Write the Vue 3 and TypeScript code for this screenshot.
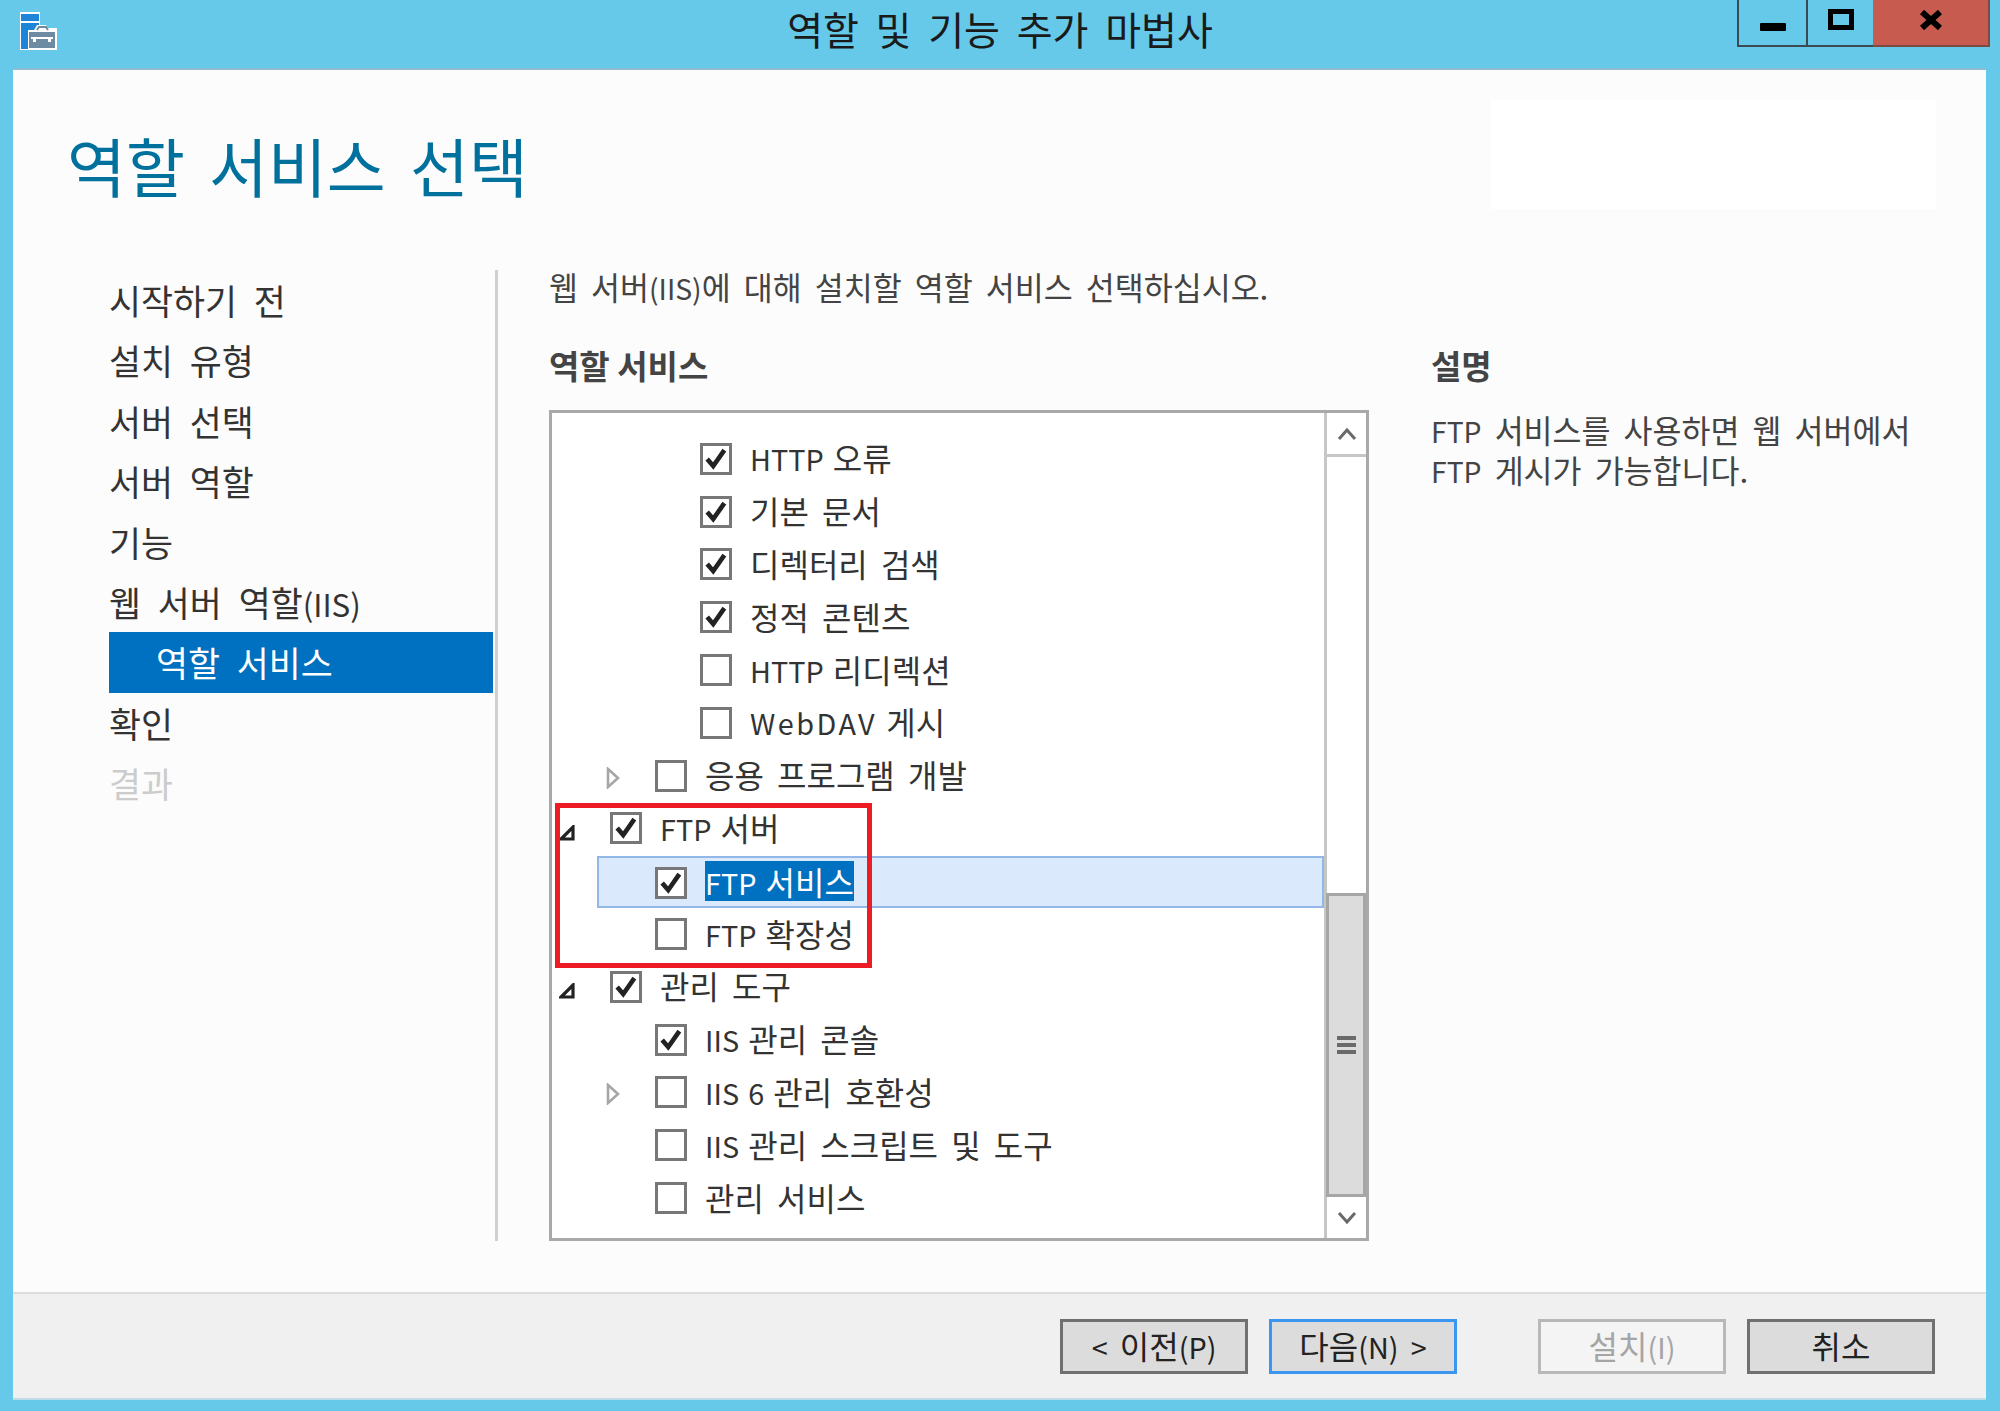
<script setup lang="ts">
interface Row {
  label: string
  level: 0 | 1 | 2
  checked: boolean
  expander?: 'open' | 'closed'
  selected?: boolean
  wide?: boolean
}

interface Seg {
  t: string
  latin: boolean
}

// The reference's Latin glyphs are set smaller than its Hangul, so mixed strings are split.
function segs(text: string): Seg[] {
  return text
    .split(/([A-Za-z0-9()<>]+)/)
    .filter((t) => t.length > 0)
    .map((t) => ({ t, latin: /^[A-Za-z0-9()<>]/.test(t) }))
}

const steps: { label: string; state?: string }[] = [
  { label: '시작하기 전' },
  { label: '설치 유형' },
  { label: '서버 선택' },
  { label: '서버 역할' },
  { label: '기능' },
  { label: '웹 서버 역할(IIS)' },
  { label: '역할 서비스', state: 'active' },
  { label: '확인' },
  { label: '결과', state: 'disabled' },
]

const rows: Row[] = [
  { label: 'HTTP 오류', level: 2, checked: true },
  { label: '기본 문서', level: 2, checked: true },
  { label: '디렉터리 검색', level: 2, checked: true },
  { label: '정적 콘텐츠', level: 2, checked: true },
  { label: 'HTTP 리디렉션', level: 2, checked: false },
  { label: 'WebDAV 게시', level: 2, checked: false, wide: true },
  { label: '응용 프로그램 개발', level: 1, checked: false, expander: 'closed' },
  { label: 'FTP 서버', level: 0, checked: true, expander: 'open' },
  { label: 'FTP 서비스', level: 1, checked: true, selected: true },
  { label: 'FTP 확장성', level: 1, checked: false },
  { label: '관리 도구', level: 0, checked: true, expander: 'open' },
  { label: 'IIS 관리 콘솔', level: 1, checked: true },
  { label: 'IIS 6 관리 호환성', level: 1, checked: false, expander: 'closed' },
  { label: 'IIS 관리 스크립트 및 도구', level: 1, checked: false },
  { label: '관리 서비스', level: 1, checked: false },
]

const intro = '웹 서버(IIS)에 대해 설치할 역할 서비스 선택하십시오.'
const descLines = ['FTP 서비스를 사용하면 웹 서버에서', 'FTP 게시가 가능합니다.']
const buttons: { label: string; kind?: string }[] = [
  { label: '< 이전(P)' },
  { label: '다음(N) >', kind: 'btn-default' },
  { label: '설치(I)', kind: 'btn-disabled' },
  { label: '취소' },
]
</script>

<template>
  <div class="window">
    <header class="titlebar">
      <svg class="app-icon" viewBox="0 0 40 40" width="40" height="40">
        <path d="M2 1h20v16h17v22H2z" fill="#fff" />
        <rect x="3" y="3" width="18" height="7" fill="#1e84d8" />
        <rect x="3" y="12" width="18" height="26" fill="#1e84d8" />
        <path d="M10 38V19h6l3-5h9l3 5h7v19z" fill="#fff" />
        <rect x="11" y="21" width="26" height="16" fill="#6f8aa3" />
        <path d="M19 19l2-3h7l2 3" fill="none" stroke="#6f8aa3" stroke-width="2" />
        <rect x="13" y="26" width="22" height="2" fill="#fff" />
        <rect x="15" y="26" width="3" height="5" fill="#fff" />
        <rect x="30" y="26" width="3" height="5" fill="#fff" />
      </svg>
      <div class="window-title">역할 및 기능 추가 마법사</div>
      <div class="controls">
        <div class="ctl ctl-min"><span class="min-glyph"></span></div>
        <div class="ctl ctl-max"><span class="max-glyph"></span></div>
        <div class="ctl ctl-close">
          <svg viewBox="0 0 24 20" width="24" height="20">
            <path d="M3 2l18 16M21 2L3 18" stroke="#000" stroke-width="6" fill="none" />
          </svg>
        </div>
      </div>
    </header>

    <main class="panel">
      <div class="head">
        <h1 class="page-title">역할 서비스 선택</h1>
        <div class="banner"></div>
      </div>

      <div class="body">
        <nav class="steps">
          <div v-for="s in steps" :key="s.label" class="step" :class="s.state">
            <span v-for="(p, i) in segs(s.label)" :key="i" :class="{ latin: p.latin }">{{ p.t }}</span>
          </div>
        </nav>

        <section class="content">
          <div class="main-col">
            <p class="intro"><span v-for="(p, i) in segs(intro)" :key="i" :class="{ latin: p.latin }">{{ p.t }}</span></p>
            <h2 class="col-head">역할 서비스</h2>
            <div class="listbox">
              <div class="tree">
                <div
                  v-for="r in rows"
                  :key="r.label"
                  class="row"
                  :class="'lvl' + r.level"
                >
                  <div class="inner" :class="{ selected: r.selected }">
                    <span class="slot">
                      <svg v-if="r.expander === 'closed'" class="tri-closed" viewBox="0 0 14 22" width="14" height="22">
                        <path d="M2 2l10 9-10 9z" fill="#fff" stroke="#a6a6a6" stroke-width="2.600" />
                      </svg>
                      <svg v-else-if="r.expander === 'open'" class="tri-open" viewBox="0 0 16 16" width="16" height="16">
                        <path d="M14 2v12H2z" fill="#fff" stroke="#222" stroke-width="3.200" />
                      </svg>
                    </span>
                    <span class="check">
                      <svg v-if="r.checked" viewBox="0 0 28 28" width="28" height="28">
                        <path d="M4.500 14l6.500 7.500L23 4.500" fill="none" stroke="#222" stroke-width="5" />
                      </svg>
                    </span>
                    <span class="label" :class="{ wide: r.wide }"><span v-for="(p, i) in segs(r.label)" :key="i" :class="{ latin: p.latin }">{{ p.t }}</span></span>
                  </div>
                </div>
              </div>
              <div class="scrollbar">
                <div class="sb-btn sb-up">
                  <svg viewBox="0 0 20 14" width="20" height="14">
                    <path d="M2 12l8-9 8 9" fill="none" stroke="#6a6a6a" stroke-width="3" />
                  </svg>
                </div>
                <div class="sb-track">
                  <div class="sb-thumb">
                    <span class="grip"></span><span class="grip"></span><span class="grip"></span>
                  </div>
                </div>
                <div class="sb-btn sb-down">
                  <svg viewBox="0 0 20 14" width="20" height="14">
                    <path d="M2 2l8 9 8-9" fill="none" stroke="#6a6a6a" stroke-width="3" />
                  </svg>
                </div>
              </div>
              <div class="callout"></div>
            </div>
          </div>

          <aside class="side-col">
            <h2 class="col-head side-head">설명</h2>
            <p v-for="line in descLines" :key="line" class="desc">
              <span v-for="(p, i) in segs(line)" :key="i" :class="{ latin: p.latin }">{{ p.t }}</span>
            </p>
          </aside>
        </section>
      </div>

      <footer class="footer">
        <button v-for="b in buttons" :key="b.label" class="btn" :class="b.kind">
          <span v-for="(p, i) in segs(b.label)" :key="i" :class="{ latin: p.latin }">{{ p.t }}</span>
        </button>
      </footer>
    </main>
  </div>
</template>

<style>
html, body { margin: 0; padding: 0; background: #66c9ea; }
</style>

<style scoped>
.window {
  width: 2000px;
  height: 1411px;
  box-sizing: border-box;
  background: #66c9ea;
  padding: 0 14px 11px 13px;
  display: flex;
  flex-direction: column;
  font-family: "Noto Sans CJK KR", "Noto Sans", sans-serif;
  color: #333;
  overflow: hidden;
}
.latin {
  font-size: 0.9em;
  line-height: 1;
}
.titlebar {
  height: 70px;
  flex: none;
  position: relative;
  display: flex;
  align-items: flex-start;
  margin: 0 -14px 0 -13px;
  padding: 0 10px 0 18px;
}
.app-icon { margin-top: 11px; }
.window-title {
  position: absolute;
  left: 0;
  right: 0;
  top: 3px;
  text-align: center;
  font-size: 39px;
  line-height: 50px;
  color: #1a1a1a;
  word-spacing: 8px;
}
.controls {
  margin-left: auto;
  display: flex;
  height: 47px;
}
.ctl {
  box-sizing: border-box;
  border-bottom: 2px solid #3b4a52;
  display: flex;
  align-items: center;
  justify-content: center;
}
.ctl-min {
  width: 71px;
  border-left: 2px solid #3b4a52;
  border-right: 2px solid #3b4a52;
}
.ctl-max { width: 65px; }
.ctl-close {
  width: 117px;
  background: #c75b50;
  border-right: 2px solid #7d4a44;
  border-bottom-color: #7d4a44;
}
.min-glyph {
  width: 26px;
  height: 8px;
  background: #000;
  margin-top: 8px;
  border-radius: 1px;
}
.max-glyph {
  width: 26px;
  height: 21px;
  box-sizing: border-box;
  border: 5px solid #000;
  margin-top: -6px;
}
.ctl-close svg { margin-top: -6px; }

.panel {
  flex: 1;
  display: flex;
  flex-direction: column;
  background: #fcfcfc;
  box-shadow: 0 -2px 0 #8fbcd2;
  min-height: 0;
}
.head {
  height: 200px;
  flex: none;
  display: flex;
  align-items: flex-start;
  justify-content: space-between;
  padding: 0 50px 0 54px;
}
.page-title {
  margin: 54px 0 0;
  font-size: 64px;
  line-height: 80px;
  font-weight: 400;
  color: #00709c;
  word-spacing: 10px;
}
.banner {
  width: 446px;
  height: 109px;
  margin-top: 30px;
  background: #fff;
}
.body {
  flex: 1;
  display: flex;
  min-height: 0;
  padding-left: 96px;
  padding-bottom: 51px;
}
.steps {
  width: 389px;
  box-sizing: border-box;
  border-right: 3px solid #d0d0d0;
  flex: none;
}
.step {
  height: 60.400px;
  line-height: 60px;
  font-size: 34.800px;
  padding-left: 0;
  color: #333;
  word-spacing: 9px;
  white-space: nowrap;
  margin-right: 2px;
}
.step.active {
  background: #0070c0;
  color: #fff;
  padding-left: 47px;
}
.step.disabled { color: #ccc; }

.content {
  flex: 1;
  display: flex;
  padding-left: 51px;
  min-width: 0;
}
.main-col {
  width: 820px;
  display: flex;
  flex-direction: column;
  flex: none;
}
.intro {
  margin: 0;
  height: 53px;
  line-height: 33px;
  font-size: 31.500px;
  color: #444;
  word-spacing: 6px;
  white-space: nowrap;
}
.col-head {
  margin: 0;
  height: 87px;
  line-height: 84px;
  font-size: 33px;
  font-weight: 700;
  color: #444;
}
.side-head { height: 86px; }
.listbox {
  flex: 1;
  position: relative;
  display: flex;
  box-sizing: border-box;
  border: 3px solid #a9a9a9;
  background: #fff;
  min-height: 0;
}
.tree {
  flex: 1;
  padding-top: 19px;
  min-width: 0;
}
.row {
  height: 52.800px;
  display: flex;
}
.lvl0 { padding-left: 0; }
.lvl1 { padding-left: 45px; }
.lvl2 { padding-left: 90px; }
.inner {
  flex: 1;
  display: flex;
  align-items: center;
}
.inner.selected {
  margin: 2px 0 -1px;
  background: #dbe9fc;
  box-shadow: inset 0 0 0 2px #92b8e8;
}
.inner.selected .label {
  background: #0070c0;
  color: #fff;
  line-height: 40px;
}
.slot {
  width: 58px;
  flex: none;
  padding-left: 9px;
  box-sizing: border-box;
  display: flex;
  align-items: center;
}
.tri-open { margin: 10px 0 0 -2px; }
.tri-closed { margin-top: 5px; }
.check {
  width: 32px;
  height: 32px;
  box-sizing: border-box;
  border: 3px solid #777;
  background: #fff;
  flex: none;
  display: flex;
  align-items: center;
  justify-content: center;
  margin-top: 1px;
  margin-right: 18px;
}
.label {
  font-size: 32px;
  line-height: 40px;
  color: #333;
  word-spacing: 6px;
  white-space: nowrap;
  margin-top: -2px;
}
.label .latin { margin-right: -4px; }
.label.wide .latin { letter-spacing: 2.500px; }
.scrollbar {
  width: 42px;
  flex: none;
  display: flex;
  flex-direction: column;
  border-left: 3px solid #c6c6c6;
  box-sizing: border-box;
}
.sb-btn {
  height: 41px;
  flex: none;
  display: flex;
  align-items: center;
  justify-content: center;
}
.sb-up { border-bottom: 3px solid #c6c6c6; }
.sb-track {
  flex: 1;
  display: flex;
  flex-direction: column;
  justify-content: flex-end;
  background: #fff;
}
.sb-thumb {
  height: 304px;
  box-sizing: border-box;
  background: #dcdcdc;
  border: 3px solid #a6a6a6;
  margin-left: -1px;
  display: flex;
  flex-direction: column;
  align-items: center;
  justify-content: center;
  gap: 3px;
}
.grip {
  width: 19px;
  height: 4px;
  background: #6a6a6a;
}
.callout {
  position: absolute;
  left: 3px;
  top: 390px;
  width: 317px;
  height: 165px;
  box-sizing: border-box;
  border: 5px solid #ed1c24;
  pointer-events: none;
}
.side-col {
  flex: 1;
  padding-left: 62px;
  min-width: 0;
  margin-top: 53px;
}
.desc {
  margin: 0;
  font-size: 31.500px;
  line-height: 40px;
  color: #444;
  word-spacing: 6px;
  white-space: nowrap;
}
.footer {
  height: 108px;
  flex: none;
  box-sizing: border-box;
  background: #f0f0f0;
  border-top: 2px solid #dcdcdc;
  border-bottom: 2px solid #bfdbe8;
  display: flex;
  align-items: center;
  justify-content: flex-end;
  padding-right: 51px;
  gap: 21px;
}
.btn {
  width: 188px;
  height: 55px;
  box-sizing: border-box;
  background: #dcdcdc;
  border: 3px solid #707070;
  font-family: inherit;
  font-size: 32px;
  line-height: 40px;
  color: #222;
  padding: 0 0 2px;
  word-spacing: 5px;
}
.btn-default { border-color: #3c96f0; }
.btn-disabled {
  background: #f4f4f4;
  border-color: #b8b8b8;
  color: #a5a5a5;
  margin-left: 60px;
}
</style>
